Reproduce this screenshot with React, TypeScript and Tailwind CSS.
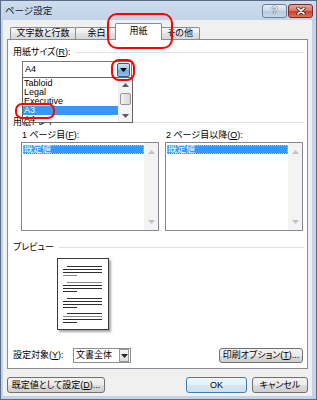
import React from 'react';

const btnFace =
  'bg-[linear-gradient(#f2f2f2,#ebebeb_50%,#dddddd_50%,#cfcfcf)] border border-[#707070] rounded-[3px]';

function Tri({ up, color }: { up?: boolean; color: string }) {
  return (
    <svg width="7" height="4" viewBox="0 0 7 4">
      <path d={up ? 'M0 4L3.5 0L7 4Z' : 'M0 0L7 0L3.5 4Z'} fill={color} />
    </svg>
  );
}

function GroupHeader({ children, gap }: { children: React.ReactNode; gap?: string }) {
  return (
    <div className="h-[12px] flex items-center pl-[5px] pr-[3px]">
      <span className="whitespace-nowrap">{children}</span>
      <div className={`flex-1 h-px bg-[#d9e2ea] ${gap ?? 'ml-[6px]'}`} />
    </div>
  );
}

function ListBox() {
  return (
    <div className="w-[138px] h-[89px] border border-[#828790] bg-white flex">
      <div className="flex-1 pt-[2px] pl-[1px]">
        <div className="h-[9px] bg-[#3399ff] text-white flex items-center pl-[1px] outline-dotted outline-1 outline-[#a8cfff] -outline-offset-1">
          既定値
        </div>
      </div>
      <div className="w-[14px] bg-[#f3f3f3] flex flex-col justify-between">
        <div className="h-[17px] flex items-center justify-center">
          <Tri up color="#c2c2c2" />
        </div>
        <div className="h-[17px] flex items-center justify-center">
          <Tri color="#c2c2c2" />
        </div>
      </div>
    </div>
  );
}

const sizes = ['Tabloid', 'Legal', 'Executive', 'A3', 'A4'];

export default function App() {
  return (
    <div className="relative w-[317px] h-[400px] overflow-hidden flex flex-col border border-[#5a6e88] bg-[#c2d3e9] text-[9px] leading-none text-black font-['Liberation_Sans','Noto_Sans_CJK_JP',sans-serif] [font-feature-settings:'palt']">
      {/* title bar */}
      <div className="h-[19px] shrink-0 flex items-start justify-between pl-[4px] pr-[3px] bg-[linear-gradient(#cddcee,#c2d3e9)]">
        <span className="mt-[5px] text-[9.5px] text-[#1b1b1b]">ページ設定</span>
        <div className="flex gap-[1px] mt-[3px]">
          <div className="w-[25px] h-[14px] rounded-[3px] border border-[#6c809c] bg-[linear-gradient(#e6eef7,#cad8ea_50%,#b5c8df_50%,#c6d8ec)] flex items-center justify-center">
            <span className="text-[10px] font-bold text-white [text-shadow:0_0_1px_#25354b,0_0_1px_#25354b]">?</span>
          </div>
          <div className="w-[25px] h-[14px] rounded-[3px] border border-[#7a2a22] bg-[linear-gradient(#eaa99c,#d8705f_50%,#c3402d_50%,#d9735d)] flex items-center justify-center">
            <svg width="10" height="8" viewBox="0 0 10 8">
              <path d="M2 1.2L8 6.8M8 1.2L2 6.8" stroke="#3d1510" strokeWidth="3.2" strokeLinecap="round" />
              <path d="M2 1.2L8 6.8M8 1.2L2 6.8" stroke="#ffffff" strokeWidth="1.7" strokeLinecap="round" />
            </svg>
          </div>
        </div>
      </div>

      {/* client area */}
      <div className="flex-1 ml-[2px] mr-[4px] mb-[3px] bg-[#f0f0f0] flex flex-col">
        <div className="mx-[4px] pt-[3px]">
          {/* tabs */}
          <div className="h-[16px] flex items-end pl-[3px]">
            <div className="w-[66px] h-[12px] border border-b-0 border-[#898c95] rounded-t-[2px] bg-[linear-gradient(#f6f6f6,#ececec_50%,#e2e2e2_50%,#d9d9d9)] flex items-center justify-center">
              文字数と行数
            </div>
            <div className="w-[43px] h-[12px] -ml-[1px] border border-b-0 border-[#898c95] rounded-t-[2px] bg-[linear-gradient(#f6f6f6,#ececec_50%,#e2e2e2_50%,#d9d9d9)] flex items-center justify-center">
              余白
            </div>
            <div className="relative z-10 w-[47px] h-[17px] -ml-[3px] -mb-[1px] border border-b-0 border-[#898c95] rounded-t-[2px] bg-white flex items-center justify-center pb-[1px]">
              用紙
            </div>
            <div className="w-[40px] h-[12px] -ml-[2px] border border-b-0 border-[#898c95] rounded-t-[2px] bg-[linear-gradient(#f6f6f6,#ececec_50%,#e2e2e2_50%,#d9d9d9)] flex items-center justify-center">
              その他
            </div>
          </div>

          {/* panel */}
          <div className="h-[330px] border border-[#898c95] bg-white flex flex-col">
            <div className="mt-[6px]">
              <GroupHeader>
                用紙サイズ(<span className="underline">R</span>):
              </GroupHeader>
            </div>

            {/* combo with open list */}
            <div className="mt-[3px] ml-[14px] relative z-10 w-[110px] h-[17px] border border-[#7a7a7a] bg-white flex items-center">
              <span className="flex-1 pl-[2px]">A4</span>
              <div className="w-[13px] h-[14px] mr-[1px] rounded-[2px] border border-[#2c628b] bg-[linear-gradient(#c9e4f8,#93c6ec_50%,#6aa8dd_50%,#8ec2ea)] flex items-center justify-center">
                <Tri color="#000000" />
              </div>
              <div className="absolute -left-[1px] top-[15px] w-[111px] h-[46px] border border-[#646464] bg-white flex overflow-hidden">
                <div className="flex-1 pt-[1px] flex flex-col">
                  {sizes.map((s) => (
                    <div
                      key={s}
                      className={`h-[9px] shrink-0 flex items-center pl-[1px] ${s === 'A3' ? 'bg-[#3399ff] text-white' : ''}`}
                    >
                      {s}
                    </div>
                  ))}
                </div>
                <div className="w-[14px] bg-[#f4f4f4] border-l border-[#ececec] flex flex-col">
                  <div className="h-[13px] flex items-center justify-center">
                    <Tri up color="#5a5a5a" />
                  </div>
                  <div className="flex-1 flex justify-center pt-[2px]">
                    <div className="w-[11px] h-[12px] rounded-[2px] border border-[#979797] bg-[linear-gradient(90deg,#f3f3f3,#e4e4e4_50%,#d8d8d8)]" />
                  </div>
                  <div className="h-[13px] flex items-center justify-center">
                    <Tri color="#5a5a5a" />
                  </div>
                </div>
              </div>
            </div>

            <div className="mt-[38px]">
              <GroupHeader>用紙トレイ</GroupHeader>
            </div>

            <div className="mt-[2px] ml-[13px] flex gap-[6px]">
              <div className="w-[138px] flex flex-col">
                <div className="h-[10px] flex items-center pl-[1px]">
                  1 ページ目(<span className="underline">F</span>):
                </div>
                <div className="mt-[2px]">
                  <ListBox />
                </div>
              </div>
              <div className="w-[138px] flex flex-col">
                <div className="h-[10px] flex items-center pl-[1px]">
                  2 ページ目以降(<span className="underline">O</span>):
                </div>
                <div className="mt-[2px]">
                  <ListBox />
                </div>
              </div>
            </div>

            <div className="mt-[10px]">
              <GroupHeader gap="ml-[5px]">プレビュー</GroupHeader>
            </div>

            {/* page thumbnail */}
            <div className="mt-[5px] ml-[49px] w-[52px] h-[72px] border border-[#3a3a3a] bg-white shadow-[2px_2px_2px_rgba(0,0,0,0.35)]">
              <svg width="50" height="70" viewBox="0 0 50 70">
                {[7, 23, 39, 54].map((y, i) => (
                  <g key={y} strokeWidth="1">
                    <line x1="9" x2="44" y1={y + 0.5} y2={y + 0.5} stroke={i === 1 ? '#8a8a8a' : '#2e2e2e'} />
                    <line x1="5" x2="44" y1={y + 3.5} y2={y + 3.5} stroke={i === 3 ? '#8a8a8a' : '#2e2e2e'} />
                    <line x1="5" x2="44" y1={y + 6.5} y2={y + 6.5} stroke="#2e2e2e" />
                    <line x1="5" x2="19" y1={y + 9.5} y2={y + 9.5} stroke={i === 0 ? '#8a8a8a' : '#2e2e2e'} />
                  </g>
                ))}
              </svg>
            </div>

            {/* apply to row */}
            <div className="mt-[18px] h-[15px] flex items-center pl-[5px] pr-[4px]">
              <span className="w-[60px]">
                設定対象(<span className="underline">Y</span>):
              </span>
              <div className="w-[58px] h-[15px] border border-[#8e8f8f] bg-white flex items-center">
                <span className="flex-1 pl-[2px]">文書全体</span>
                <div className="w-[10px] h-[13px] mr-[1px] border border-[#9a9a9a] bg-[linear-gradient(#f4f4f4,#dcdcdc)] flex items-center justify-center">
                  <Tri color="#222222" />
                </div>
              </div>
              <div className={`ml-auto w-[84px] h-[15px] flex items-center justify-center ${btnFace}`}>
                印刷オプション(<span className="underline">T</span>)...
              </div>
            </div>
          </div>
        </div>

        {/* bottom buttons */}
        <div className="mt-[8px] h-[16px] px-[4px] flex">
          <div className={`w-[98px] flex items-center justify-center ${btnFace}`}>
            既定値として設定(<span className="underline">D</span>)...
          </div>
          <div className="ml-auto flex gap-[5px]">
            <div className="w-[61px] flex items-center justify-center rounded-[3px] border border-[#3c7fb1] bg-[linear-gradient(#f1f7fc,#e7f0f8_50%,#d8e6f2_50%,#cfdeec)]">
              OK
            </div>
            <div className={`w-[56px] flex items-center justify-center ${btnFace}`}>キャンセル</div>
          </div>
        </div>
      </div>

      {/* red annotations */}
      <div className="absolute left-[106px] top-[12px] w-[66px] h-[36px] rounded-[10px] border-2 border-[#ff0000] z-20" />
      <div className="absolute left-[110px] top-[58px] w-[24px] h-[22px] rounded-[8px] border-2 border-[#ff0000] z-20" />
      <div className="absolute left-[14px] top-[102px] w-[40px] h-[16px] rounded-[7px] border-2 border-[#ff0000] z-20" />
    </div>
  );
}
